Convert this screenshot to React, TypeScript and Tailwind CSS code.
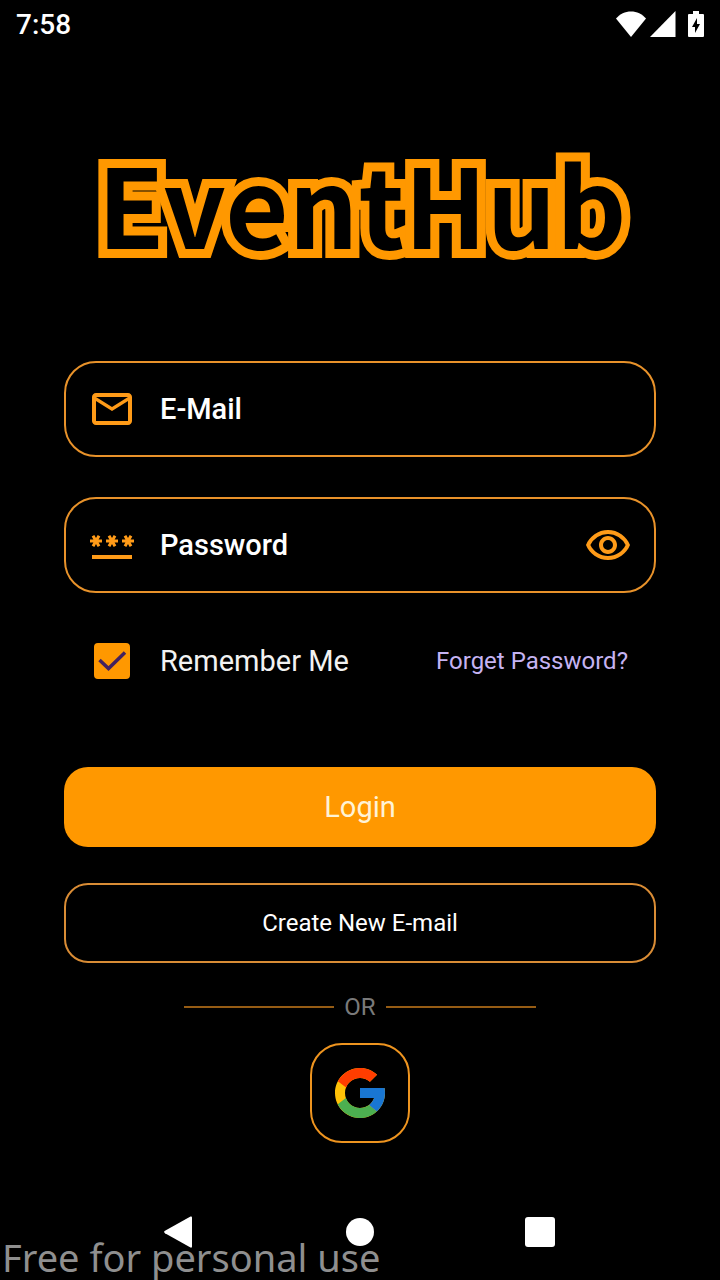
import { useState } from "react";
import { FcGoogle } from "react-icons/fc";
import { MdOutlineEmail, MdOutlineRemoveRedEye, MdPassword } from "react-icons/md";

function StatusBar() {
  return (
    <header className="flex h-12 items-center justify-between px-4 text-white">
      <time className="pt-0.5 text-[28px] leading-8 font-medium">7:58</time>
      <div className="flex items-center gap-1">
        <svg className="h-[26px] w-[30px]" viewBox="0 0 30 26" fill="currentColor" aria-hidden="true">
          <path d="M15 26 0 7.5C4 3 9 .5 15 .5S26 3 30 7.5Z" />
        </svg>
        <svg className="mr-2 h-[26px] w-[26px]" viewBox="0 0 26 26" fill="currentColor" aria-hidden="true">
          <path d="M0 26 25.5 0V26Z" />
        </svg>
        <svg className="h-[26px] w-4" viewBox="0 0 16 26" fill="currentColor" aria-hidden="true">
          <path
            fillRule="evenodd"
            d="M5 0h6v3h4q1 0 1 1v21q0 1-1 1H1q-1 0-1-1V4q0-1 1-1h4ZM9 7 4 16h3v6l5-9H9Z"
          />
        </svg>
      </div>
    </header>
  );
}

function Logo() {
  return (
    <h1 className="flex h-[148px] items-center justify-center pl-1 font-['Noto_Sans_CJK_JP',sans-serif] text-[109px] leading-[148px] font-bold text-black [-webkit-text-stroke:18px_#ff9800] [paint-order:stroke_fill]">
      EventHub
    </h1>
  );
}

function Field({ icon, children }: { icon: React.ReactNode; children: React.ReactNode }) {
  return (
    <div className="flex h-24 items-center gap-6 rounded-[32px] border-2 border-[#e8922a] px-[22px] text-[#ff9b18]">
      {icon}
      {children}
    </div>
  );
}

const inputClass =
  "min-w-0 flex-1 bg-transparent text-[29px] leading-8 font-medium text-white outline-none placeholder:text-white placeholder:opacity-100";

function Check({ checked, onChange }: { checked: boolean; onChange: (v: boolean) => void }) {
  return (
    <label className="flex items-center gap-[30px] text-[29px] leading-8 text-[#f2f2f2]">
      <span className="relative flex size-9">
        <input
          type="checkbox"
          checked={checked}
          onChange={(e) => onChange(e.target.checked)}
          className="peer size-9 appearance-none rounded border-2 border-[#ff9800] checked:bg-[#ff9800]"
        />
        <svg
          className="pointer-events-none absolute inset-0 hidden size-9 peer-checked:block"
          viewBox="0 0 36 36"
          fill="none"
          stroke="#43215f"
          strokeWidth="3.5"
          aria-hidden="true"
        >
          <path d="M5.5 17 14.5 25.5 31 9.5" />
        </svg>
      </span>
      Remember Me
    </label>
  );
}

function Navigation() {
  const button = "flex h-16 items-center justify-center";
  return (
    <nav className="mx-auto mt-auto mb-4 grid w-3/4 grid-cols-3 text-white">
      <button type="button" aria-label="Back" className={button}>
        <svg className="size-8" viewBox="0 0 32 32" fill="currentColor" aria-hidden="true">
          <path d="M28 1.5v29q0 1.5-1.5 1L1 17.2q-1.8-1.2 0-2.4L26.5.5q1.5-.5 1.5 1Z" />
        </svg>
      </button>
      <button type="button" aria-label="Home" className={button}>
        <span className="size-7 rounded-full bg-white" />
      </button>
      <button type="button" aria-label="Recent apps" className={button}>
        <span className="size-[30px] rounded-[3px] bg-white" />
      </button>
    </nav>
  );
}

export default function App() {
  const [remember, setRemember] = useState(true);
  const [visible, setVisible] = useState(false);

  return (
    <div className="relative flex min-h-screen flex-col overflow-hidden bg-black font-[Roboto,sans-serif]">
      <StatusBar />
      <main className="flex flex-col px-16 pt-20">
        <Logo />
        <form className="mt-[85px] flex flex-col" onSubmit={(e) => e.preventDefault()}>
          <div className="flex flex-col gap-10">
            <Field icon={<MdOutlineEmail className="size-12 shrink-0" />}>
              <input type="email" aria-label="E-Mail" placeholder="E-Mail" className={inputClass} />
            </Field>
            <Field icon={<MdPassword className="size-12 shrink-0" />}>
              <input
                type={visible ? "text" : "password"}
                aria-label="Password"
                placeholder="Password"
                className={inputClass}
              />
              <button type="button" aria-label="Show password" onClick={() => setVisible(!visible)}>
                <MdOutlineRemoveRedEye className="size-12" />
              </button>
            </Field>
          </div>
          <div className="mt-12 flex h-10 items-center justify-between pr-7 pl-[30px]">
            <Check checked={remember} onChange={setRemember} />
            <a href="#forgot" className="text-2xl text-[#c5b3f2]">
              Forget Password?
            </a>
          </div>
          <button
            type="submit"
            className="mt-[86px] h-20 rounded-3xl bg-[#ff9800] text-[29px] leading-8 text-[#fff3d6]"
          >
            Login
          </button>
          <button
            type="button"
            className="mt-9 h-20 rounded-3xl border-2 border-[#d98c35] text-2xl text-white"
          >
            Create New E-mail
          </button>
        </form>
        <div className="mt-7 flex h-8 items-center gap-[10px] px-[120px] text-2xl text-[#7a7a7a]">
          <span className="h-0.5 flex-1 bg-[#965c14]" />
          OR
          <span className="h-0.5 flex-1 bg-[#965c14]" />
        </div>
        <button
          type="button"
          aria-label="Sign in with Google"
          className="mt-5 flex size-[100px] items-center justify-center self-center rounded-[32px] border-2 border-[#ee941f]"
        >
          <FcGoogle className="size-[60px]" />
        </button>
      </main>
      <Navigation />
      <p className="pointer-events-none absolute bottom-0 left-0 pl-0.5 font-['Noto_Sans',sans-serif] text-[38px] leading-[46px] whitespace-nowrap text-[#8f8f8f]">
        Free for personal use
      </p>
    </div>
  );
}
